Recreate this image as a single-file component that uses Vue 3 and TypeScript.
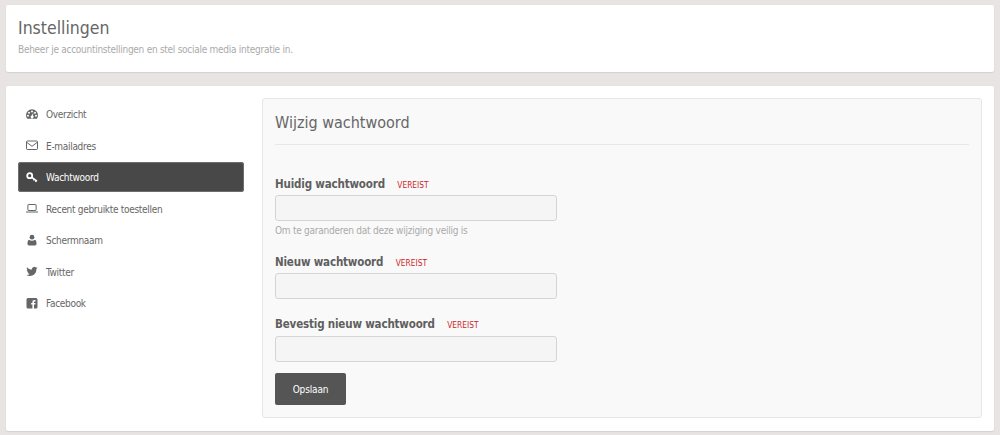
<script setup lang="ts">
const items = [
  { key: 'dash', label: 'Overzicht' },
  { key: 'mail', label: 'E-mailadres' },
  { key: 'key', label: 'Wachtwoord', active: true },
  { key: 'laptop', label: 'Recent gebruikte toestellen' },
  { key: 'user', label: 'Schermnaam' },
  { key: 'twitter', label: 'Twitter' },
  { key: 'fb', label: 'Facebook' },
]
</script>

<template>
  <div class="page">
    <header class="card head">
      <h1>Instellingen</h1>
      <p>Beheer je accountinstellingen en stel sociale media integratie in.</p>
    </header>
    <main class="card body">
      <nav class="side">
        <a v-for="i in items" :key="i.key" class="item" :class="{ active: i.active }">
          <svg class="ico" viewBox="0 0 12 12" width="12" height="12">
            <g v-if="i.key === 'dash'" fill="currentColor">
              <path fill-rule="evenodd" d="M6 1.2A6 6 0 0 0 0 7.200c0 1.400.4 2.600 1.200 3.600h9.600c.8-1 1.200-2.200 1.200-3.600A6 6 0 0 0 6 1.200ZM6 2.600a1 1 0 1 1 0 2 1 1 0 0 1 0-2ZM3 3.800a1 1 0 1 1 0 2 1 1 0 0 1 0-2Zm6 0a1 1 0 1 1 0 2 1 1 0 0 1 0-2ZM2 6.800a1 1 0 1 1 0 2 1 1 0 0 1 0-2Zm8 0a1 1 0 1 1 0 2 1 1 0 0 1 0-2ZM7.600 4.600 6.900 7.500a1.500 1.500 0 1 1-1.200-.1Z" />
            </g>
            <g v-else-if="i.key === 'mail'" fill="none" stroke="currentColor" stroke-width="1">
              <rect x="0.5" y="2" width="11" height="8.500" rx="0.8" />
              <path d="M.8 3.400 6 7.300l5.200-3.900" />
            </g>
            <g v-else-if="i.key === 'key'" fill="none" stroke="currentColor">
              <circle cx="3.700" cy="4.700" r="2.500" stroke-width="1.800" />
              <path d="M5.800 6.300 11 10.200" stroke-width="1.600" />
              <path d="M8.200 8.200 7.400 9.400M10.200 9.600l-.8 1.200" stroke-width="1.400" />
            </g>
            <g v-else-if="i.key === 'laptop'" fill="none" stroke="currentColor" stroke-width="1">
              <rect x="1.900" y="2.500" width="8.200" height="6" rx="0.5" />
              <path d="M0 10h12" />
            </g>
            <g v-else-if="i.key === 'user'" fill="currentColor">
              <circle cx="6" cy="3.200" r="2.400" />
              <path d="M3 5.800c.8.700 1.900 1 3 1s2.200-.3 3-1c1.200.4 1.500 2.200 1.500 4 0 1-.5 1.700-1.400 1.700H2.900c-.9 0-1.400-.7-1.400-1.700 0-1.800.3-3.600 1.500-4Z" />
            </g>
            <g v-else-if="i.key === 'twitter'" fill="currentColor">
              <path d="M11.700 2.800c-.4.200-.9.300-1.300.4.500-.3.800-.7 1-1.300-.4.300-.9.500-1.500.6a2.400 2.400 0 0 0-4 2.100C4 4.500 2.300 3.600 1.100 2.200c-.6 1.100-.3 2.400.7 3.100-.4 0-.7-.1-1-.3 0 1.100.8 2.100 1.900 2.300-.4.100-.7.100-1.100 0 .3.900 1.200 1.600 2.200 1.600-1 .8-2.300 1.100-3.500 1 3.900 2.400 10.400.6 10.100-6 .5-.3.900-.7 1.300-1.100Z" />
            </g>
            <g v-else fill="currentColor">
              <path fill-rule="evenodd" d="M2 1h8a1.500 1.500 0 0 1 1.500 1.500v7.500A1.500 1.500 0 0 1 10 11.500H8V7.600h1.300l.2-1.500H8V5.200c0-.5.200-.7.700-.7h.8V3.100H8.300C7 3.100 6.400 3.900 6.400 5v1.100H5.100v1.500h1.300v3.900H2A1.500 1.500 0 0 1 .5 10V2.500A1.500 1.500 0 0 1 2 1Z" />
            </g>
          </svg>
          <span class="txt">{{ i.label }}</span>
        </a>
      </nav>
      <section class="panel">
        <h2>Wijzig wachtwoord</h2>
        <form class="form" @submit.prevent>
          <div class="field first">
            <label>Huidig wachtwoord <em>VEREIST</em></label>
            <input type="password" />
            <small>Om te garanderen dat deze wijziging veilig is</small>
          </div>
          <div class="field second">
            <label>Nieuw wachtwoord <em>VEREIST</em></label>
            <input type="password" />
          </div>
          <div class="field third">
            <label>Bevestig nieuw wachtwoord <em>VEREIST</em></label>
            <input type="password" />
          </div>
          <button type="submit">Opslaan</button>
        </form>
      </section>
    </main>
  </div>
</template>

<style>
html, body { margin: 0; background: #e9e4e4; }
</style>

<style scoped>
.page {
  width: 1000px;
  height: 435px;
  box-sizing: border-box;
  padding: 5px 6px 0;
  overflow: hidden;
  font-family: "DejaVu Sans Condensed", "Noto Sans", "Liberation Sans", sans-serif;
  color: #5d5d5d;
}
.card {
  background: #fff;
  border-radius: 2px;
  box-shadow: 0 1px 1px #d5d0d0, 0 0 1px #d8d4d4;
}
.head { height: 67px; box-sizing: border-box; padding: 13px 12px 0; }
h1 { margin: 0; font-size: 17.500px; line-height: 20px; font-weight: 400; color: #666; }
.head p { margin: 5px 0 0; font-size: 10px; line-height: 13px; letter-spacing: -0.27px; color: #aaa; }
.body {
  margin-top: 14px;
  height: 345px;
  box-sizing: border-box;
  padding: 12px 12px 13px;
  display: flex;
}
.side { width: 226px; flex: none; margin-right: 18px; padding-top: 0.5px; display: flex; flex-direction: column; }
.item {
  height: 30px;
  flex: none;
  margin-bottom: 1.500px;
  padding-left: 8px;
  display: flex;
  align-items: center;
  gap: 8px;
  font-size: 10px;
  letter-spacing: -0.3px;
  color: #666;
  border-radius: 3px;
  box-sizing: border-box;
}
.txt { padding-top: 2px; }
.item.active { background: #484848; color: #fff; box-shadow: 0 0 0 1px #6e6e6e inset; }
.ico { flex: none; }
.panel {
  flex: 1;
  background: #f9f9f9;
  border: 1px solid #e6e6e6;
  border-radius: 3px;
  padding: 0 12px;
  box-sizing: border-box;
}
h2 {
  margin: 0;
  height: 46px;
  box-sizing: border-box;
  padding-top: 14px;
  font-size: 16px;
  line-height: 20px;
  font-weight: 400;
  color: #666;
  border-bottom: 1px solid #e8e8e8;
}
.form { display: flex; flex-direction: column; }
.field { display: flex; flex-direction: column; }
.first { margin-top: 32px; }
.second { margin-top: 18px; }
.third { margin-top: 18px; }
.third label { margin-bottom: 4px; }
label { font-size: 11.500px; line-height: 14px; letter-spacing: -0.17px; font-weight: 700; color: #5f5f5f; margin-bottom: 3px; }
em { font-style: normal; font-weight: 400; font-size: 8.300px; letter-spacing: 0; color: #cc1f1f; margin-left: 9px; }
input {
  width: 282px;
  height: 26px;
  box-sizing: border-box;
  background: #f5f5f5;
  border: 1px solid #d5d5d5;
  border-radius: 3px;
  padding: 0 6px;
  outline: none;
}
small { margin-top: 3px; font-size: 10px; line-height: 13px; letter-spacing: -0.25px; color: #aaa; }
button {
  margin-top: 11px;
  width: 71px;
  height: 32px;
  background: #555;
  color: #fff;
  border: 0;
  border-radius: 2px;
  font: inherit;
  font-size: 10px;
  letter-spacing: -0.15px;
}
</style>
